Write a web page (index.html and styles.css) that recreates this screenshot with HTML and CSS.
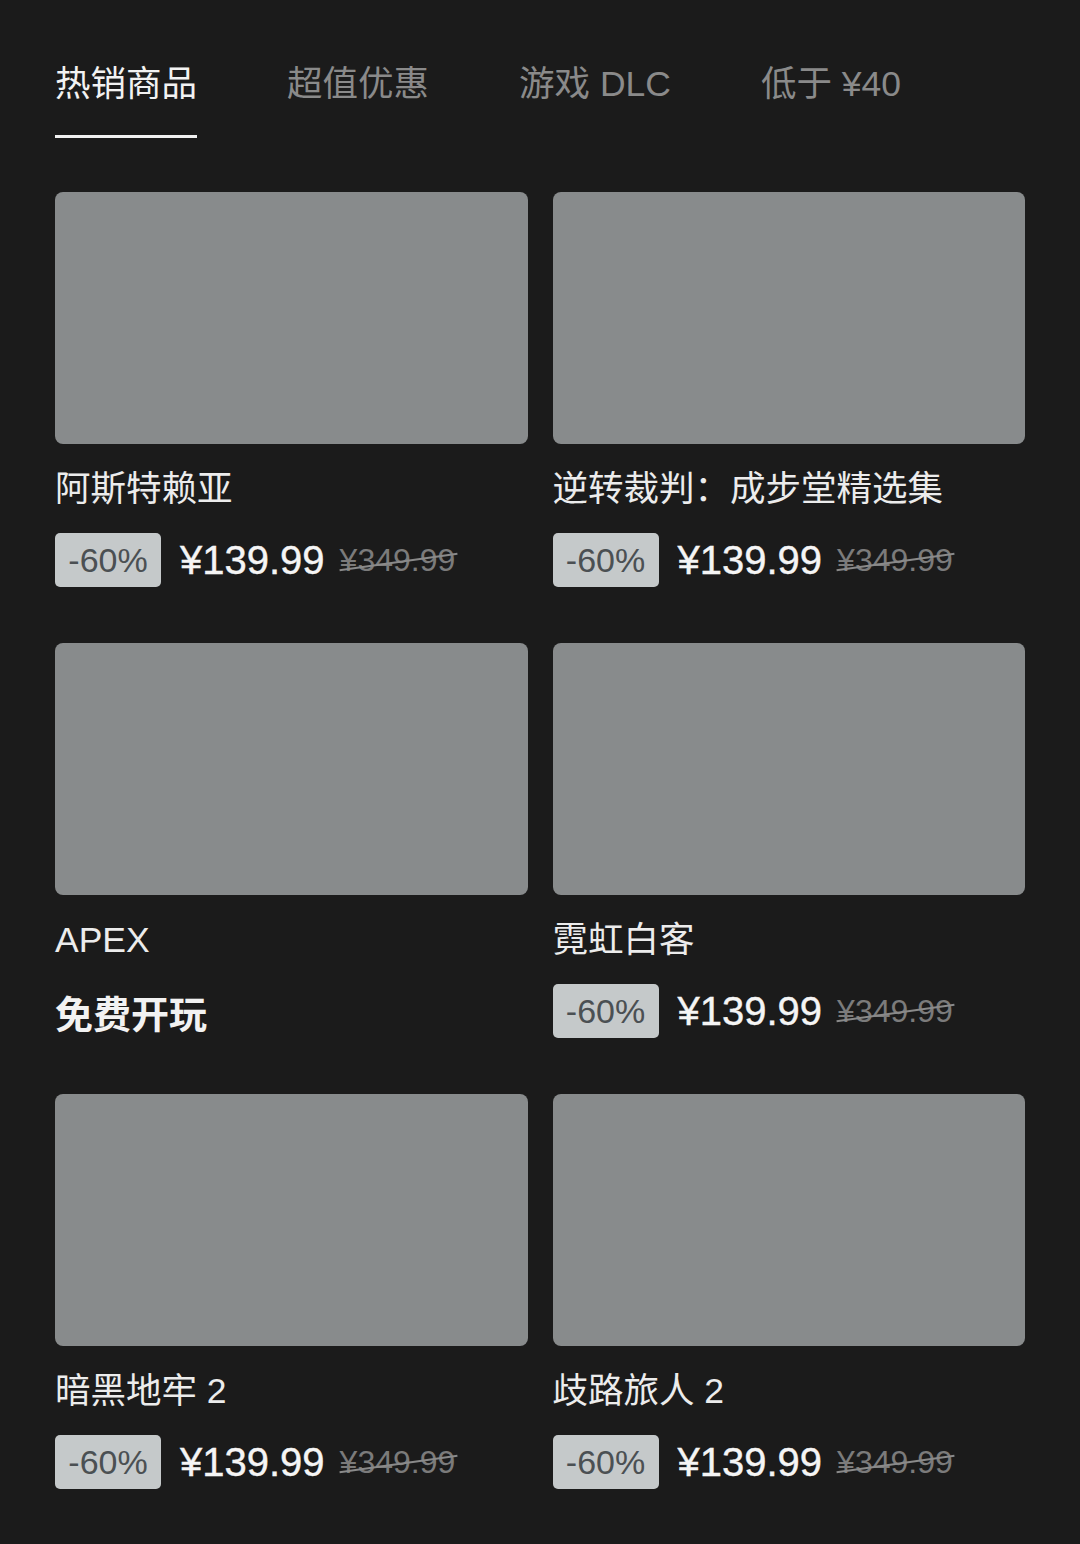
FILE: index.html
```html
<!DOCTYPE html>
<html lang="zh-CN">
<head>
<meta charset="utf-8">
<title>商店</title>
<link rel="stylesheet" href="styles.css">
</head>
<body>
<div class="page">
  <nav class="tabs">
    <div class="tab active">热销商品</div>
    <div class="tab">超值优惠</div>
    <div class="tab">游戏 DLC</div>
    <div class="tab">低于 ¥40</div>
  </nav>
  <main class="grid">
    <div class="card">
      <div class="thumb"></div>
      <div class="title">阿斯特赖亚</div>
      <div class="price-row"><span class="badge">-60%</span><span class="price">¥139.99</span><span class="old">¥349.99</span></div>
    </div>
    <div class="card">
      <div class="thumb"></div>
      <div class="title">逆转裁判：成步堂精选集</div>
      <div class="price-row"><span class="badge">-60%</span><span class="price">¥139.99</span><span class="old">¥349.99</span></div>
    </div>
    <div class="card">
      <div class="thumb"></div>
      <div class="title">APEX</div>
      <div class="price-row"><span class="free">免费开玩</span></div>
    </div>
    <div class="card">
      <div class="thumb"></div>
      <div class="title">霓虹白客</div>
      <div class="price-row"><span class="badge">-60%</span><span class="price">¥139.99</span><span class="old">¥349.99</span></div>
    </div>
    <div class="card">
      <div class="thumb"></div>
      <div class="title">暗黑地牢 2</div>
      <div class="price-row"><span class="badge">-60%</span><span class="price">¥139.99</span><span class="old">¥349.99</span></div>
    </div>
    <div class="card">
      <div class="thumb"></div>
      <div class="title">歧路旅人 2</div>
      <div class="price-row"><span class="badge">-60%</span><span class="price">¥139.99</span><span class="old">¥349.99</span></div>
    </div>
  </main>
</div>
</body>
</html>
```
FILE: styles.css
```css
html, body {
  margin: 0;
  padding: 0;
  background: #1b1b1b;
}
body {
  font-family: "Liberation Sans", "Noto Sans CJK SC", sans-serif;
  color: #ededed;
}
.page {
  padding: 0 55px;
}
.tabs {
  display: flex;
  gap: 90px;
  padding-top: 59px;
}
.tab {
  font-size: 35.5px;
  line-height: 50px;
  color: #8a8a8a;
  padding-bottom: 26px;
  border-bottom: 3px solid transparent;
  white-space: nowrap;
}
.tab.active {
  color: #f2f2f2;
  border-bottom-color: #f0f0f0;
}
.grid {
  display: grid;
  grid-template-columns: 1fr 1fr;
  column-gap: 25px;
  row-gap: 56px;
  margin-top: 54px;
}
.thumb {
  height: 252px;
  background: #888b8c;
  border-radius: 8px;
}
.title {
  margin-top: 20px;
  font-size: 35.5px;
  line-height: 50px;
  color: #ececec;
  white-space: nowrap;
}
.price-row {
  margin-top: 19px;
  height: 54px;
  display: flex;
  align-items: center;
}
.badge {
  display: inline-flex;
  align-items: center;
  justify-content: center;
  height: 54px;
  width: 106px;
  box-sizing: border-box;
  background: #c5c9ca;
  color: #4b5053;
  font-size: 34px;
  border-radius: 5px;
}
.price {
  margin-left: 19px;
  font-size: 40px;
  color: #f5f5f5;
  -webkit-text-stroke: 0.4px #f5f5f5;
}
.old {
  position: relative;
  margin-left: 15px;
  font-size: 32px;
  color: #7b7b7b;
}
.old::after {
  content: "";
  position: absolute;
  left: -1px;
  right: -2px;
  top: 52%;
  height: 2px;
  background: #8a8a8a;
  transform: rotate(-8deg);
}
.free {
  font-size: 38px;
  font-weight: 700;
  color: #f2f2f2;
}
```
